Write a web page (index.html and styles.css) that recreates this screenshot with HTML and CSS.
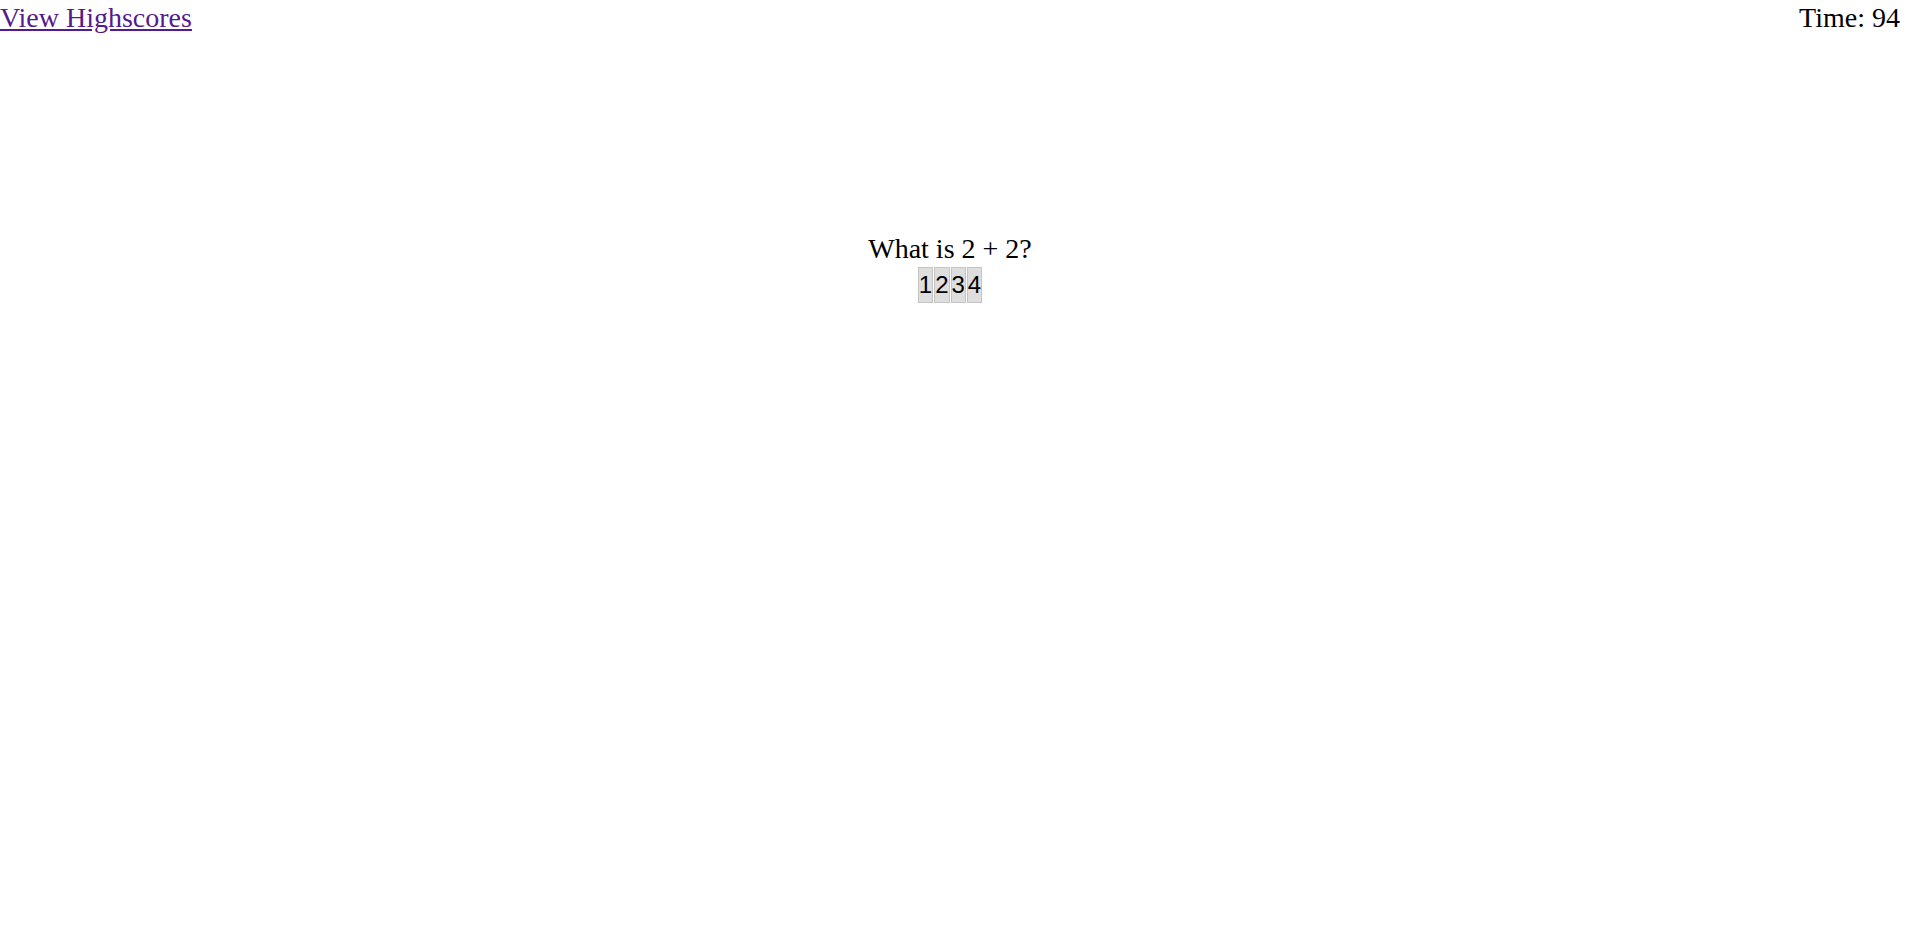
FILE: index.html
```html
<!DOCTYPE html>
<html>
<head>
<meta charset="utf-8">
<link rel="stylesheet" href="styles.css">
</head>
<body>
<header class="top">
  <a class="scores" href="#">View Highscores</a>
  <div class="timer">Time: 94</div>
</header>
<main class="quiz">
  <div class="question">What is 2 + 2?</div>
  <div class="answers">
    <button class="ans">1</button><button class="ans">2</button><button class="ans">3</button><button class="ans">4</button>
  </div>
</main>
</body>
</html>
```
FILE: styles.css
```css
body {
  margin: 0;
  padding-right: 20px;
  font-family: "Liberation Serif", serif;
  font-size: 28px;
  color: #000;
  background: #fff;
}
.top {
  display: flex;
  justify-content: space-between;
  line-height: 1.3;
}
.scores {
  color: #551a8b;
}
.quiz {
  margin-top: 197px;
  display: flex;
  flex-direction: column;
  align-items: center;
  line-height: 1.15;
}
.answers {
  display: flex;
  gap: 1px;
  margin-top: 1px;
}
.ans {
  font-family: "Liberation Sans", Arial, sans-serif;
  font-size: 24px;
  padding: 3px 0;
  margin: 0;
  border: 1px solid #c4c4c4;
  background: #dedede;
  color: #000;
  line-height: normal;
}
```
